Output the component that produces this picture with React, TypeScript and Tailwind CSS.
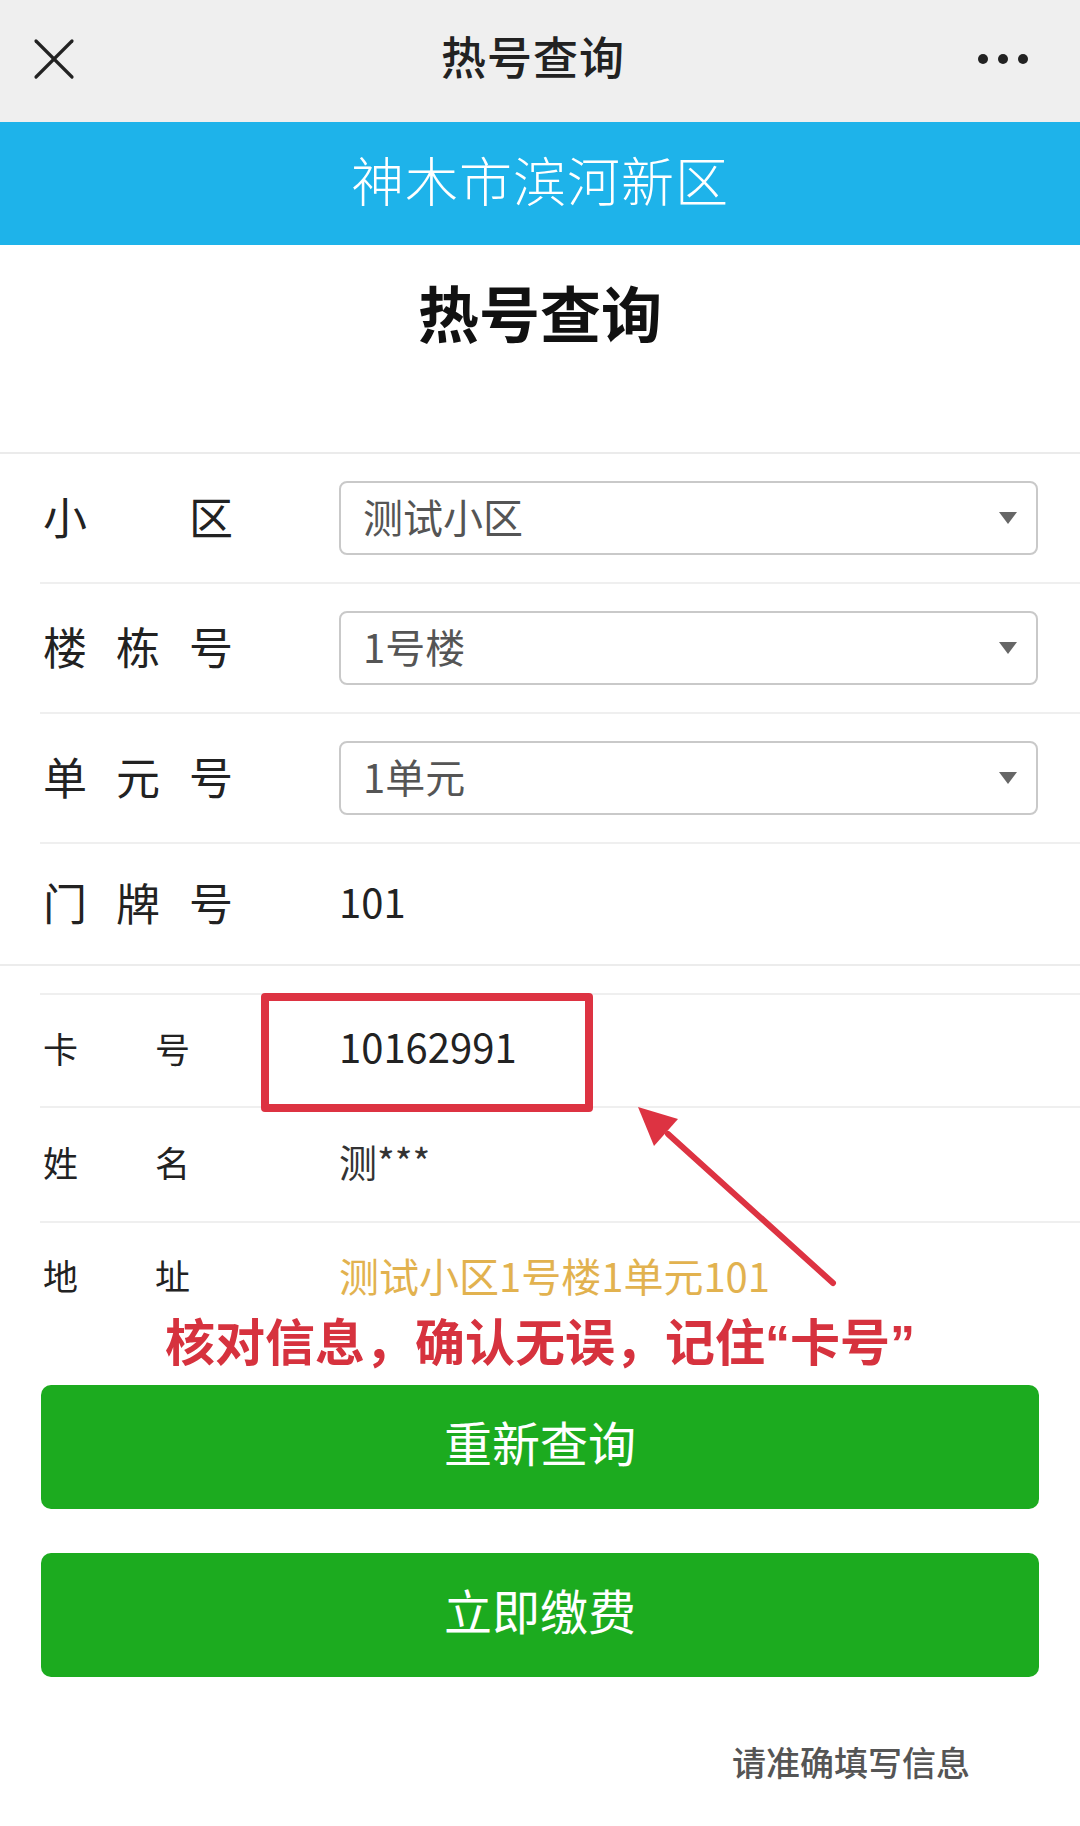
import React from "react";

function SelectBox({ value }: { value: string }) {
  return (
    <div className="flex-1 h-[74px] border-2 border-[#c9c9c9] rounded-[8px] flex items-center justify-between pl-[22px] pr-[19px] bg-white">
      <span className="text-[40px] leading-none text-[#555] pb-[4px]">{value}</span>
      <svg width="18" height="12" viewBox="0 0 18 12">
        <polygon points="0,0 18,0 9,12" fill="#666" />
      </svg>
    </div>
  );
}

function BigLabel({ chars }: { chars: string[] }) {
  return (
    <div className="w-[190px] flex justify-between text-[44px] leading-none text-[#222] pb-[4px]">
      {chars.map((c, i) => (
        <span key={i}>{c}</span>
      ))}
    </div>
  );
}

function SmallLabel({ chars }: { chars: string[] }) {
  return (
    <div className="w-[147px] flex justify-between text-[35px] leading-none text-[#222] pb-[6px]">
      {chars.map((c, i) => (
        <span key={i}>{c}</span>
      ))}
    </div>
  );
}

export default function App() {
  return (
    <div className="relative w-[1080px] min-h-[1826px] bg-white font-['Noto_Sans_CJK_SC','Noto_Sans',sans-serif]">
      {/* Top nav bar */}
      <div className="relative h-[122px] bg-[#efefef] flex items-center justify-center pb-[12px] pr-[14px]">
        <svg className="absolute left-[33px] top-[38px]" width="42" height="42" viewBox="0 0 42 42">
          <line x1="3" y1="3" x2="39" y2="39" stroke="#222" strokeWidth="3.2" strokeLinecap="round" />
          <line x1="39" y1="3" x2="3" y2="39" stroke="#222" strokeWidth="3.2" strokeLinecap="round" />
        </svg>
        <span className="text-[45px] leading-none font-medium text-[#222] tracking-[1px]">热号查询</span>
        <div className="absolute right-[52px] top-[54px] flex gap-[10px]">
          <span className="w-[10px] h-[10px] rounded-full bg-[#222]" />
          <span className="w-[10px] h-[10px] rounded-full bg-[#222]" />
          <span className="w-[10px] h-[10px] rounded-full bg-[#222]" />
        </div>
      </div>

      {/* Blue banner */}
      <div className="h-[123px] bg-[#1eb3ea] flex items-center justify-center pb-[8px]">
        <span className="text-[53px] leading-none text-white font-light tracking-[1px]">神木市滨河新区</span>
      </div>

      {/* Heading */}
      <div className="pt-[36px] pb-[110px] flex justify-center border-b-2 border-[#ebebeb]">
        <span className="text-[61px] leading-none font-bold text-[#111]">热号查询</span>
      </div>

      {/* Select rows */}
      <div className="pl-[40px]">
        <div className="h-[130px] flex items-center pl-[3px] pr-[42px] border-b-2 border-[#efefef]">
          <BigLabel chars={["小", "区"]} />
          <div className="ml-[106px] flex-1 flex">
            <SelectBox value="测试小区" />
          </div>
        </div>
        <div className="h-[130px] flex items-center pl-[3px] pr-[42px] border-b-2 border-[#efefef]">
          <BigLabel chars={["楼", "栋", "号"]} />
          <div className="ml-[106px] flex-1 flex">
            <SelectBox value="1号楼" />
          </div>
        </div>
        <div className="h-[130px] flex items-center pl-[3px] pr-[42px] border-b-2 border-[#efefef]">
          <BigLabel chars={["单", "元", "号"]} />
          <div className="ml-[106px] flex-1 flex">
            <SelectBox value="1单元" />
          </div>
        </div>
        <div className="h-[120px] flex items-center pl-[3px] pr-[42px]">
          <BigLabel chars={["门", "牌", "号"]} />
          <div className="ml-[106px] flex-1 text-[40px] leading-none text-[#222] pb-[6px]">101</div>
        </div>
      </div>
      <div className="border-t-2 border-[#ececec] h-[29px]" />

      {/* Info rows */}
      <div className="pl-[40px]">
        <div className="border-t-2 border-[#efefef] h-[113px] flex items-center pl-[3px]">
          <SmallLabel chars={["卡", "号"]} />
          <div className="ml-[149px] text-[40px] leading-none text-[#222] pb-[10px]">10162991</div>
        </div>
        <div className="border-t-2 border-[#efefef] h-[115px] flex items-center pl-[3px]">
          <SmallLabel chars={["姓", "名"]} />
          <div className="ml-[149px] text-[38px] leading-none text-[#333] pb-[8px]">测***</div>
        </div>
        <div className="border-t-2 border-[#efefef] h-[100px] flex items-center pt-[10px] pl-[3px]">
          <SmallLabel chars={["地", "址"]} />
          <div className="ml-[149px] text-[40px] leading-none text-[#e2b24f] pb-[4px]">测试小区1号楼1单元101</div>
        </div>
      </div>

      {/* Annotation text */}
      <div className="h-[50px] flex items-center justify-center pb-[10px]">
        <span className="text-[50px] leading-none font-bold text-[#d6323e]">
          核对信息，确认无误，记住<span className="font-['Liberation_Sans',sans-serif]">“</span>卡号<span className="font-['Liberation_Sans',sans-serif]">”</span>
        </span>
      </div>

      {/* Buttons */}
      <div className="px-[41px] mt-[14px] flex flex-col gap-[44px]">
        <div className="h-[124px] rounded-[10px] bg-[#1cab1f] flex items-center justify-center pb-[12px]">
          <span className="text-[48px] leading-none text-white">重新查询</span>
        </div>
        <div className="h-[124px] rounded-[10px] bg-[#1cab1f] flex items-center justify-center pb-[12px]">
          <span className="text-[48px] leading-none text-white">立即缴费</span>
        </div>
      </div>

      {/* Footer note */}
      <div className="mt-[68px] flex justify-end pr-[110px]">
        <span className="text-[34px] leading-none font-medium text-[#555]">请准确填写信息</span>
      </div>

      {/* Red annotation box and arrow overlay */}
      <div className="absolute left-[261px] top-[993px] w-[332px] h-[119px] border-[8px] border-[#dd3342] rounded-[4px] pointer-events-none" />
      <svg
        className="absolute left-0 top-0 pointer-events-none"
        width="1080"
        height="1826"
        viewBox="0 0 1080 1826"
      >
        <line x1="833" y1="1283" x2="668" y2="1134" stroke="#dd3342" strokeWidth="6" strokeLinecap="round" />
        <polygon points="638,1107 678,1119 654,1146" fill="#dd3342" />
      </svg>
    </div>
  );
}
